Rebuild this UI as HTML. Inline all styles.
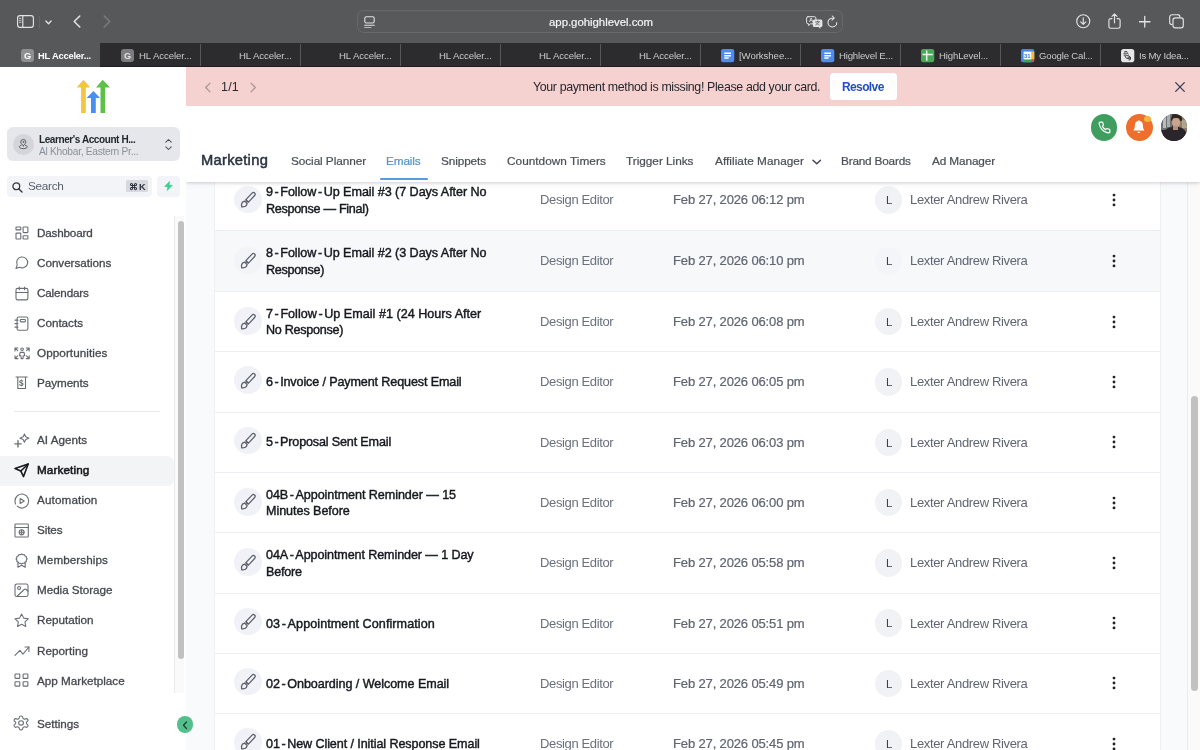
<!DOCTYPE html>
<html lang="en"><head><meta charset="utf-8"><title>Marketing - Emails</title>
<style>
*{box-sizing:border-box;margin:0;padding:0}
html,body{width:1200px;height:750px;overflow:hidden;background:#fff;font-family:"Liberation Sans",sans-serif}
div,span,svg{position:absolute}
.t{white-space:pre;will-change:transform}
svg{overflow:visible}
.s{fill:none;stroke-linecap:round;stroke-linejoin:round}
.n *{vector-effect:non-scaling-stroke}
</style></head><body>
<div id="content" style="left:186px;top:106px;width:1014px;height:644px;background:#f9fafb"></div>
<div id="card" style="left:213.5px;top:106px;width:947px;height:644px;background:#fff;border-left:1px solid #eff1f4;border-right:1px solid #eff1f4"></div>
<div style="left:1187px;top:182px;width:13px;height:568px;background:#fafafa;border-left:1px solid #ececec"></div>
<div style="left:1190.5px;top:396px;width:7px;height:295px;border-radius:4px;background:#c1c1c1"></div>
<div style="left:214.5px;top:230px;width:945.5px;height:1px;background:#eceef1"></div>
<div style="left:234.3px;top:185.65px;width:27.6px;height:27.6px;border-radius:50%;background:#f1f2f7"></div>
<svg style="left:248.3px;top:199.85px" width="1" height="1"><g transform="rotate(43)" class="s" stroke="#5b606a" stroke-width="1.25"><rect x="-1.75" y="-9.6" width="3.5" height="11.2" rx="1.75"/><path d="M-1.7 1.2h3.4M-1.75 3.1L-2.6 5.4Q-2.7 7.2 0 9.3Q2.7 7.2 2.6 5.4L1.75 3.1Z"/></g></svg>
<span class="t" style="left:266.20px;top:186px;font-size:12.6px;line-height:12.6px;letter-spacing:-0.057px;color:#15181e;-webkit-text-stroke:.42px #15181e;">9<span style="position:static;padding:0 1.60px">-</span>Follow<span style="position:static;padding:0 1.60px">-</span>Up Email #3 (7 Days After No</span>
<span class="t" style="left:266.20px;top:203px;font-size:12.6px;line-height:12.6px;letter-spacing:-0.309px;color:#15181e;-webkit-text-stroke:.42px #15181e;">Response — Final)</span>
<span class="t" style="left:540.00px;top:193px;font-size:13px;line-height:13px;letter-spacing:-0.369px;color:#6a707c;">Design Editor</span>
<span class="t" style="left:673.00px;top:193px;font-size:13px;line-height:13px;letter-spacing:-0.140px;color:#5f6571;-webkit-text-stroke:.22px #5f6571;">Feb 27, 2026 06:12 pm</span>
<div style="left:874.5px;top:186.20px;width:27.5px;height:27.5px;border-radius:50%;background:#f0f2f6"></div>
<span class="t" style="left:885.60px;top:195px;font-size:11.5px;line-height:11.5px;color:#3c4149;">L</span>
<span class="t" style="left:909.50px;top:193px;font-size:13px;line-height:13px;letter-spacing:-0.339px;color:#5f6571;">Lexter Andrew Rivera</span>
<svg style="left:1114.25px;top:199.95px" width="1" height="1"><circle cx="0" cy="-4.9" r="1.42" fill="#1f2329"/><circle cx="0" cy="0" r="1.42" fill="#1f2329"/><circle cx="0" cy="4.9" r="1.42" fill="#1f2329"/></svg>
<div style="left:214.5px;top:231px;width:945.5px;height:60px;background:#f7f8fa"></div>
<div style="left:214.5px;top:291px;width:945.5px;height:1px;background:#eceef1"></div>
<div style="left:234.3px;top:246.60px;width:27.6px;height:27.6px;border-radius:50%;background:#f3f4f8"></div>
<svg style="left:248.3px;top:260.80px" width="1" height="1"><g transform="rotate(43)" class="s" stroke="#5b606a" stroke-width="1.25"><rect x="-1.75" y="-9.6" width="3.5" height="11.2" rx="1.75"/><path d="M-1.7 1.2h3.4M-1.75 3.1L-2.6 5.4Q-2.7 7.2 0 9.3Q2.7 7.2 2.6 5.4L1.75 3.1Z"/></g></svg>
<span class="t" style="left:266.20px;top:247px;font-size:12.6px;line-height:12.6px;letter-spacing:-0.057px;color:#15181e;-webkit-text-stroke:.42px #15181e;">8<span style="position:static;padding:0 1.60px">-</span>Follow<span style="position:static;padding:0 1.60px">-</span>Up Email #2 (3 Days After No</span>
<span class="t" style="left:266.20px;top:264px;font-size:12.6px;line-height:12.6px;letter-spacing:-0.317px;color:#15181e;-webkit-text-stroke:.42px #15181e;">Response)</span>
<span class="t" style="left:540.00px;top:254px;font-size:13px;line-height:13px;letter-spacing:-0.369px;color:#6a707c;">Design Editor</span>
<span class="t" style="left:673.00px;top:254px;font-size:13px;line-height:13px;letter-spacing:-0.140px;color:#5f6571;-webkit-text-stroke:.22px #5f6571;">Feb 27, 2026 06:10 pm</span>
<div style="left:874.5px;top:247.15px;width:27.5px;height:27.5px;border-radius:50%;background:#f4f5f8"></div>
<span class="t" style="left:885.60px;top:256px;font-size:11.5px;line-height:11.5px;color:#3c4149;">L</span>
<span class="t" style="left:909.50px;top:254px;font-size:13px;line-height:13px;letter-spacing:-0.339px;color:#5f6571;">Lexter Andrew Rivera</span>
<svg style="left:1114.25px;top:260.90px" width="1" height="1"><circle cx="0" cy="-4.9" r="1.42" fill="#1f2329"/><circle cx="0" cy="0" r="1.42" fill="#1f2329"/><circle cx="0" cy="4.9" r="1.42" fill="#1f2329"/></svg>
<div style="left:214.5px;top:351px;width:945.5px;height:1px;background:#eceef1"></div>
<div style="left:234.3px;top:307.30px;width:27.6px;height:27.6px;border-radius:50%;background:#f1f2f7"></div>
<svg style="left:248.3px;top:321.50px" width="1" height="1"><g transform="rotate(43)" class="s" stroke="#5b606a" stroke-width="1.25"><rect x="-1.75" y="-9.6" width="3.5" height="11.2" rx="1.75"/><path d="M-1.7 1.2h3.4M-1.75 3.1L-2.6 5.4Q-2.7 7.2 0 9.3Q2.7 7.2 2.6 5.4L1.75 3.1Z"/></g></svg>
<span class="t" style="left:266.20px;top:308px;font-size:12.6px;line-height:12.6px;letter-spacing:0.009px;color:#15181e;-webkit-text-stroke:.42px #15181e;">7<span style="position:static;padding:0 1.60px">-</span>Follow<span style="position:static;padding:0 1.60px">-</span>Up Email #1 (24 Hours After</span>
<span class="t" style="left:266.20px;top:324px;font-size:12.6px;line-height:12.6px;letter-spacing:-0.289px;color:#15181e;-webkit-text-stroke:.42px #15181e;">No Response)</span>
<span class="t" style="left:540.00px;top:315px;font-size:13px;line-height:13px;letter-spacing:-0.369px;color:#6a707c;">Design Editor</span>
<span class="t" style="left:673.00px;top:315px;font-size:13px;line-height:13px;letter-spacing:-0.140px;color:#5f6571;-webkit-text-stroke:.22px #5f6571;">Feb 27, 2026 06:08 pm</span>
<div style="left:874.5px;top:307.85px;width:27.5px;height:27.5px;border-radius:50%;background:#f0f2f6"></div>
<span class="t" style="left:885.60px;top:317px;font-size:11.5px;line-height:11.5px;color:#3c4149;">L</span>
<span class="t" style="left:909.50px;top:315px;font-size:13px;line-height:13px;letter-spacing:-0.339px;color:#5f6571;">Lexter Andrew Rivera</span>
<svg style="left:1114.25px;top:321.60px" width="1" height="1"><circle cx="0" cy="-4.9" r="1.42" fill="#1f2329"/><circle cx="0" cy="0" r="1.42" fill="#1f2329"/><circle cx="0" cy="4.9" r="1.42" fill="#1f2329"/></svg>
<div style="left:214.5px;top:412px;width:945.5px;height:1px;background:#eceef1"></div>
<div style="left:234.3px;top:366.30px;width:27.6px;height:27.6px;border-radius:50%;background:#f1f2f7"></div>
<svg style="left:248.3px;top:380.50px" width="1" height="1"><g transform="rotate(43)" class="s" stroke="#5b606a" stroke-width="1.25"><rect x="-1.75" y="-9.6" width="3.5" height="11.2" rx="1.75"/><path d="M-1.7 1.2h3.4M-1.75 3.1L-2.6 5.4Q-2.7 7.2 0 9.3Q2.7 7.2 2.6 5.4L1.75 3.1Z"/></g></svg>
<span class="t" style="left:266.20px;top:376px;font-size:12.6px;line-height:12.6px;letter-spacing:-0.132px;color:#15181e;-webkit-text-stroke:.42px #15181e;">6<span style="position:static;padding:0 1.60px">-</span>Invoice / Payment Request Email</span>
<span class="t" style="left:540.00px;top:375px;font-size:13px;line-height:13px;letter-spacing:-0.369px;color:#6a707c;">Design Editor</span>
<span class="t" style="left:673.00px;top:375px;font-size:13px;line-height:13px;letter-spacing:-0.140px;color:#5f6571;-webkit-text-stroke:.22px #5f6571;">Feb 27, 2026 06:05 pm</span>
<div style="left:874.5px;top:368.15px;width:27.5px;height:27.5px;border-radius:50%;background:#f0f2f6"></div>
<span class="t" style="left:885.60px;top:377px;font-size:11.5px;line-height:11.5px;color:#3c4149;">L</span>
<span class="t" style="left:909.50px;top:375px;font-size:13px;line-height:13px;letter-spacing:-0.339px;color:#5f6571;">Lexter Andrew Rivera</span>
<svg style="left:1114.25px;top:381.90px" width="1" height="1"><circle cx="0" cy="-4.9" r="1.42" fill="#1f2329"/><circle cx="0" cy="0" r="1.42" fill="#1f2329"/><circle cx="0" cy="4.9" r="1.42" fill="#1f2329"/></svg>
<div style="left:214.5px;top:472px;width:945.5px;height:1px;background:#eceef1"></div>
<div style="left:234.3px;top:426.65px;width:27.6px;height:27.6px;border-radius:50%;background:#f1f2f7"></div>
<svg style="left:248.3px;top:440.85px" width="1" height="1"><g transform="rotate(43)" class="s" stroke="#5b606a" stroke-width="1.25"><rect x="-1.75" y="-9.6" width="3.5" height="11.2" rx="1.75"/><path d="M-1.7 1.2h3.4M-1.75 3.1L-2.6 5.4Q-2.7 7.2 0 9.3Q2.7 7.2 2.6 5.4L1.75 3.1Z"/></g></svg>
<span class="t" style="left:266.20px;top:436px;font-size:12.6px;line-height:12.6px;letter-spacing:-0.165px;color:#15181e;-webkit-text-stroke:.42px #15181e;">5<span style="position:static;padding:0 1.60px">-</span>Proposal Sent Email</span>
<span class="t" style="left:540.00px;top:436px;font-size:13px;line-height:13px;letter-spacing:-0.369px;color:#6a707c;">Design Editor</span>
<span class="t" style="left:673.00px;top:436px;font-size:13px;line-height:13px;letter-spacing:-0.140px;color:#5f6571;-webkit-text-stroke:.22px #5f6571;">Feb 27, 2026 06:03 pm</span>
<div style="left:874.5px;top:428.50px;width:27.5px;height:27.5px;border-radius:50%;background:#f0f2f6"></div>
<span class="t" style="left:885.60px;top:438px;font-size:11.5px;line-height:11.5px;color:#3c4149;">L</span>
<span class="t" style="left:909.50px;top:436px;font-size:13px;line-height:13px;letter-spacing:-0.339px;color:#5f6571;">Lexter Andrew Rivera</span>
<svg style="left:1114.25px;top:442.25px" width="1" height="1"><circle cx="0" cy="-4.9" r="1.42" fill="#1f2329"/><circle cx="0" cy="0" r="1.42" fill="#1f2329"/><circle cx="0" cy="4.9" r="1.42" fill="#1f2329"/></svg>
<div style="left:214.5px;top:532px;width:945.5px;height:1px;background:#eceef1"></div>
<div style="left:234.3px;top:488.20px;width:27.6px;height:27.6px;border-radius:50%;background:#f1f2f7"></div>
<svg style="left:248.3px;top:502.40px" width="1" height="1"><g transform="rotate(43)" class="s" stroke="#5b606a" stroke-width="1.25"><rect x="-1.75" y="-9.6" width="3.5" height="11.2" rx="1.75"/><path d="M-1.7 1.2h3.4M-1.75 3.1L-2.6 5.4Q-2.7 7.2 0 9.3Q2.7 7.2 2.6 5.4L1.75 3.1Z"/></g></svg>
<span class="t" style="left:266.20px;top:489px;font-size:12.6px;line-height:12.6px;letter-spacing:-0.075px;color:#15181e;-webkit-text-stroke:.42px #15181e;">04B<span style="position:static;padding:0 1.60px">-</span>Appointment Reminder — 15</span>
<span class="t" style="left:266.20px;top:505px;font-size:12.6px;line-height:12.6px;letter-spacing:-0.065px;color:#15181e;-webkit-text-stroke:.42px #15181e;">Minutes Before</span>
<span class="t" style="left:540.00px;top:496px;font-size:13px;line-height:13px;letter-spacing:-0.369px;color:#6a707c;">Design Editor</span>
<span class="t" style="left:673.00px;top:496px;font-size:13px;line-height:13px;letter-spacing:-0.140px;color:#5f6571;-webkit-text-stroke:.22px #5f6571;">Feb 27, 2026 06:00 pm</span>
<div style="left:874.5px;top:488.75px;width:27.5px;height:27.5px;border-radius:50%;background:#f0f2f6"></div>
<span class="t" style="left:885.60px;top:498px;font-size:11.5px;line-height:11.5px;color:#3c4149;">L</span>
<span class="t" style="left:909.50px;top:496px;font-size:13px;line-height:13px;letter-spacing:-0.339px;color:#5f6571;">Lexter Andrew Rivera</span>
<svg style="left:1114.25px;top:502.50px" width="1" height="1"><circle cx="0" cy="-4.9" r="1.42" fill="#1f2329"/><circle cx="0" cy="0" r="1.42" fill="#1f2329"/><circle cx="0" cy="4.9" r="1.42" fill="#1f2329"/></svg>
<div style="left:214.5px;top:593px;width:945.5px;height:1px;background:#eceef1"></div>
<div style="left:234.3px;top:548.45px;width:27.6px;height:27.6px;border-radius:50%;background:#f1f2f7"></div>
<svg style="left:248.3px;top:562.65px" width="1" height="1"><g transform="rotate(43)" class="s" stroke="#5b606a" stroke-width="1.25"><rect x="-1.75" y="-9.6" width="3.5" height="11.2" rx="1.75"/><path d="M-1.7 1.2h3.4M-1.75 3.1L-2.6 5.4Q-2.7 7.2 0 9.3Q2.7 7.2 2.6 5.4L1.75 3.1Z"/></g></svg>
<span class="t" style="left:266.20px;top:549px;font-size:12.6px;line-height:12.6px;letter-spacing:-0.111px;color:#15181e;-webkit-text-stroke:.42px #15181e;">04A<span style="position:static;padding:0 1.60px">-</span>Appointment Reminder — 1 Day</span>
<span class="t" style="left:266.20px;top:566px;font-size:12.6px;line-height:12.6px;letter-spacing:-0.218px;color:#15181e;-webkit-text-stroke:.42px #15181e;">Before</span>
<span class="t" style="left:540.00px;top:556px;font-size:13px;line-height:13px;letter-spacing:-0.369px;color:#6a707c;">Design Editor</span>
<span class="t" style="left:673.00px;top:556px;font-size:13px;line-height:13px;letter-spacing:-0.140px;color:#5f6571;-webkit-text-stroke:.22px #5f6571;">Feb 27, 2026 05:58 pm</span>
<div style="left:874.5px;top:549.00px;width:27.5px;height:27.5px;border-radius:50%;background:#f0f2f6"></div>
<span class="t" style="left:885.60px;top:558px;font-size:11.5px;line-height:11.5px;color:#3c4149;">L</span>
<span class="t" style="left:909.50px;top:556px;font-size:13px;line-height:13px;letter-spacing:-0.339px;color:#5f6571;">Lexter Andrew Rivera</span>
<svg style="left:1114.25px;top:562.75px" width="1" height="1"><circle cx="0" cy="-4.9" r="1.42" fill="#1f2329"/><circle cx="0" cy="0" r="1.42" fill="#1f2329"/><circle cx="0" cy="4.9" r="1.42" fill="#1f2329"/></svg>
<div style="left:214.5px;top:653px;width:945.5px;height:1px;background:#eceef1"></div>
<div style="left:234.3px;top:607.53px;width:27.6px;height:27.6px;border-radius:50%;background:#f1f2f7"></div>
<svg style="left:248.3px;top:621.73px" width="1" height="1"><g transform="rotate(43)" class="s" stroke="#5b606a" stroke-width="1.25"><rect x="-1.75" y="-9.6" width="3.5" height="11.2" rx="1.75"/><path d="M-1.7 1.2h3.4M-1.75 3.1L-2.6 5.4Q-2.7 7.2 0 9.3Q2.7 7.2 2.6 5.4L1.75 3.1Z"/></g></svg>
<span class="t" style="left:266.20px;top:618px;font-size:12.6px;line-height:12.6px;letter-spacing:0.066px;color:#15181e;-webkit-text-stroke:.42px #15181e;">03<span style="position:static;padding:0 1.60px">-</span>Appointment Confirmation</span>
<span class="t" style="left:540.00px;top:617px;font-size:13px;line-height:13px;letter-spacing:-0.369px;color:#6a707c;">Design Editor</span>
<span class="t" style="left:673.00px;top:617px;font-size:13px;line-height:13px;letter-spacing:-0.140px;color:#5f6571;-webkit-text-stroke:.22px #5f6571;">Feb 27, 2026 05:51 pm</span>
<div style="left:874.5px;top:609.38px;width:27.5px;height:27.5px;border-radius:50%;background:#f0f2f6"></div>
<span class="t" style="left:885.60px;top:618px;font-size:11.5px;line-height:11.5px;color:#3c4149;">L</span>
<span class="t" style="left:909.50px;top:617px;font-size:13px;line-height:13px;letter-spacing:-0.339px;color:#5f6571;">Lexter Andrew Rivera</span>
<svg style="left:1114.25px;top:623.12px" width="1" height="1"><circle cx="0" cy="-4.9" r="1.42" fill="#1f2329"/><circle cx="0" cy="0" r="1.42" fill="#1f2329"/><circle cx="0" cy="4.9" r="1.42" fill="#1f2329"/></svg>
<div style="left:214.5px;top:713px;width:945.5px;height:1px;background:#eceef1"></div>
<div style="left:234.3px;top:667.78px;width:27.6px;height:27.6px;border-radius:50%;background:#f1f2f7"></div>
<svg style="left:248.3px;top:681.98px" width="1" height="1"><g transform="rotate(43)" class="s" stroke="#5b606a" stroke-width="1.25"><rect x="-1.75" y="-9.6" width="3.5" height="11.2" rx="1.75"/><path d="M-1.7 1.2h3.4M-1.75 3.1L-2.6 5.4Q-2.7 7.2 0 9.3Q2.7 7.2 2.6 5.4L1.75 3.1Z"/></g></svg>
<span class="t" style="left:266.20px;top:678px;font-size:12.6px;line-height:12.6px;letter-spacing:-0.066px;color:#15181e;-webkit-text-stroke:.42px #15181e;">02<span style="position:static;padding:0 1.60px">-</span>Onboarding / Welcome Email</span>
<span class="t" style="left:540.00px;top:677px;font-size:13px;line-height:13px;letter-spacing:-0.369px;color:#6a707c;">Design Editor</span>
<span class="t" style="left:673.00px;top:677px;font-size:13px;line-height:13px;letter-spacing:-0.140px;color:#5f6571;-webkit-text-stroke:.22px #5f6571;">Feb 27, 2026 05:49 pm</span>
<div style="left:874.5px;top:669.62px;width:27.5px;height:27.5px;border-radius:50%;background:#f0f2f6"></div>
<span class="t" style="left:885.60px;top:679px;font-size:11.5px;line-height:11.5px;color:#3c4149;">L</span>
<span class="t" style="left:909.50px;top:677px;font-size:13px;line-height:13px;letter-spacing:-0.339px;color:#5f6571;">Lexter Andrew Rivera</span>
<svg style="left:1114.25px;top:683.38px" width="1" height="1"><circle cx="0" cy="-4.9" r="1.42" fill="#1f2329"/><circle cx="0" cy="0" r="1.42" fill="#1f2329"/><circle cx="0" cy="4.9" r="1.42" fill="#1f2329"/></svg>
<div style="left:214.5px;top:774px;width:945.5px;height:1px;background:#eceef1"></div>
<div style="left:234.3px;top:728.15px;width:27.6px;height:27.6px;border-radius:50%;background:#f1f2f7"></div>
<svg style="left:248.3px;top:742.35px" width="1" height="1"><g transform="rotate(43)" class="s" stroke="#5b606a" stroke-width="1.25"><rect x="-1.75" y="-9.6" width="3.5" height="11.2" rx="1.75"/><path d="M-1.7 1.2h3.4M-1.75 3.1L-2.6 5.4Q-2.7 7.2 0 9.3Q2.7 7.2 2.6 5.4L1.75 3.1Z"/></g></svg>
<span class="t" style="left:266.20px;top:738px;font-size:12.6px;line-height:12.6px;letter-spacing:-0.094px;color:#15181e;-webkit-text-stroke:.42px #15181e;">01<span style="position:static;padding:0 1.60px">-</span>New Client / Initial Response Email</span>
<span class="t" style="left:540.00px;top:737px;font-size:13px;line-height:13px;letter-spacing:-0.369px;color:#6a707c;">Design Editor</span>
<span class="t" style="left:673.00px;top:737px;font-size:13px;line-height:13px;letter-spacing:-0.140px;color:#5f6571;-webkit-text-stroke:.22px #5f6571;">Feb 27, 2026 05:45 pm</span>
<div style="left:874.5px;top:730.00px;width:27.5px;height:27.5px;border-radius:50%;background:#f0f2f6"></div>
<span class="t" style="left:885.60px;top:739px;font-size:11.5px;line-height:11.5px;color:#3c4149;">L</span>
<span class="t" style="left:909.50px;top:737px;font-size:13px;line-height:13px;letter-spacing:-0.339px;color:#5f6571;">Lexter Andrew Rivera</span>
<svg style="left:1114.25px;top:743.75px" width="1" height="1"><circle cx="0" cy="-4.9" r="1.42" fill="#1f2329"/><circle cx="0" cy="0" r="1.42" fill="#1f2329"/><circle cx="0" cy="4.9" r="1.42" fill="#1f2329"/></svg>
<div id="head" style="left:186px;top:106px;width:1014px;height:75.8px;background:#fff;box-shadow:0 1px 3px rgba(20,30,50,.16),0 2px 5px rgba(20,30,50,.06)"></div>
<span class="t" style="left:200.60px;top:153px;font-size:14.7px;line-height:14.7px;letter-spacing:0.289px;color:#2b3342;-webkit-text-stroke:.5px #2b3342;">Marketing</span>
<span class="t" style="left:291.00px;top:156px;font-size:11.8px;line-height:11.8px;letter-spacing:-0.077px;color:#4a4f58;-webkit-text-stroke:.22px #4a4f58;">Social Planner</span>
<span class="t" style="left:386.00px;top:156px;font-size:11.8px;line-height:11.8px;letter-spacing:-0.134px;color:#5294d6;-webkit-text-stroke:.22px #5294d6;">Emails</span>
<span class="t" style="left:441.40px;top:156px;font-size:11.8px;line-height:11.8px;letter-spacing:-0.115px;color:#4a4f58;-webkit-text-stroke:.22px #4a4f58;">Snippets</span>
<span class="t" style="left:506.80px;top:156px;font-size:11.8px;line-height:11.8px;letter-spacing:0.028px;color:#4a4f58;-webkit-text-stroke:.22px #4a4f58;">Countdown Timers</span>
<span class="t" style="left:626.30px;top:156px;font-size:11.8px;line-height:11.8px;letter-spacing:-0.019px;color:#4a4f58;-webkit-text-stroke:.22px #4a4f58;">Trigger Links</span>
<span class="t" style="left:714.50px;top:156px;font-size:11.8px;line-height:11.8px;letter-spacing:0.035px;color:#4a4f58;-webkit-text-stroke:.22px #4a4f58;">Affiliate Manager</span>
<span class="t" style="left:840.80px;top:156px;font-size:11.8px;line-height:11.8px;letter-spacing:-0.203px;color:#4a4f58;-webkit-text-stroke:.22px #4a4f58;">Brand Boards</span>
<span class="t" style="left:931.50px;top:156px;font-size:11.8px;line-height:11.8px;letter-spacing:-0.128px;color:#4a4f58;-webkit-text-stroke:.22px #4a4f58;">Ad Manager</span>
<div style="left:379.7px;top:177.6px;width:48px;height:2.2px;background:#5a9bd8;border-radius:1px"></div>
<svg style="left:811.5px;top:157.5px" width="9.5" height="8" viewBox="0 0 9.5 8"><path class="s" d="M1 2.2l3.75 3.6 3.75-3.6" stroke="#3c4250" stroke-width="1.4"/></svg>
<div style="left:1090.7px;top:114px;width:26.8px;height:26.8px;border-radius:50%;background:#3f9e5f"></div>
<svg style="left:1097.6px;top:120.8px" width="13" height="13" viewBox="0 0 24 24"><path class="s" stroke="#fff" stroke-width="2.2" d="M22 16.92v3a2 2 0 0 1-2.18 2 19.79 19.79 0 0 1-8.63-3.07 19.5 19.5 0 0 1-6-6 19.79 19.79 0 0 1-3.07-8.67A2 2 0 0 1 4.11 2h3a2 2 0 0 1 2 1.72 12.84 12.84 0 0 0 .7 2.81 2 2 0 0 1-.45 2.11L8.09 9.91a16 16 0 0 0 6 6l1.27-1.27a2 2 0 0 1 2.11-.45 12.84 12.84 0 0 0 2.81.7A2 2 0 0 1 22 16.92z"/></svg>
<div style="left:1126px;top:114px;width:26.8px;height:26.8px;border-radius:50%;background:#ee6f2d"></div>
<svg style="left:1131.400px;top:119.300px" width="15.800" height="15.800" viewBox="0 0 24 24"><path fill="#fff" d="M6 9a6 6 0 0 1 12 0c0 6 2.6 8 2.6 8.600H3.4C3.4 17 6 15 6 9z"/><path fill="#fff" d="M9.8 19.2h4.400a2.2 2.2 0 0 1-4.400 0z"/><circle cx="12" cy="3.300" r="1.4" fill="#fff"/></svg>
<div style="left:1144.2px;top:115.6px;width:6.8px;height:6.8px;border-radius:50%;background:#f3b53f"></div>
<div style="left:1160.8px;top:114px;width:26.6px;height:26.7px;border-radius:50%;overflow:hidden;background:#2b2728"><div style="left:-2px;top:-2px;width:31px;height:31px;filter:blur(.7px)"><div style="left:2px;top:2px;width:11px;height:16px;background:#6f7373"></div><div style="left:4.500px;top:2px;width:2.500px;height:14px;background:#b9bcbc"></div><div style="left:8.500px;top:2px;width:2.500px;height:13px;background:#a9adad"></div><div style="left:20px;top:3px;width:11px;height:17px;background:#8e8069"></div><div style="left:23px;top:8px;width:5px;height:8px;background:#b0a48c"></div><div style="left:4px;top:15px;width:24px;height:16px;border-radius:9px 9px 0 0;background:#29252a"></div><div style="left:12px;top:2px;width:11.500px;height:7px;border-radius:5px 5px 1px 1px;background:#2f2520"></div><div style="left:13px;top:6px;width:8px;height:9.500px;border-radius:40% 40% 50% 50%;background:#c9a58d"></div><div style="left:14.500px;top:14px;width:5px;height:4px;background:#b58f79"></div></div></div>
<div id="banner" style="left:186px;top:66.7px;width:1014px;height:39.5px;background:#f5d2cf"></div>
<svg style="left:203.5px;top:81.5px" width="8" height="11" viewBox="0 0 8 11"><path class="s" d="M6 1.2L1.700 5.500 6 9.800" stroke="#9f9093" stroke-width="1.1"/></svg>
<svg style="left:248.5px;top:81.5px" width="8" height="11" viewBox="0 0 8 11"><path class="s" d="M2 1.200L6.300 5.500 2 9.800" stroke="#9f9093" stroke-width="1.1"/></svg>
<span class="t" style="left:221.30px;top:81px;font-size:12.5px;line-height:12.5px;letter-spacing:0.203px;color:#2a2a30;">1/1</span>
<span class="t" style="left:532.50px;top:81px;font-size:12.4px;line-height:12.4px;letter-spacing:-0.357px;color:#252830;">Your payment method is missing! Please add your card.</span>
<div style="left:830px;top:73.3px;width:66.6px;height:26.3px;border-radius:3.5px;background:#fff"></div>
<span class="t" style="left:842.30px;top:81px;font-size:12px;line-height:12px;font-weight:700;letter-spacing:-0.619px;color:#1f4fc0;">Resolve</span>
<svg style="left:1175px;top:81.6px" width="10" height="10" viewBox="0 0 10 10"><path class="s" d="M.7.700l8.600 8.600M9.300.700L.7 9.300" stroke="#2c3354" stroke-width="1.2"/></svg>
<div id="side" style="left:0;top:66.7px;width:186.3px;height:684px;background:#fff"></div>
<svg style="left:0;top:0" width="1" height="1"><path fill="#f2c63e" d="M83.500 79.800L90.300 87.600H85.800V113H81.100V87.600H76.600z"/><path fill="#4a8ff0" d="M93.400 90.900L100.100 97.900H95.800V113H91V97.900H86.600z"/><path fill="#5cc246" d="M102.700 79.800L110 87.600H105.100V113H100.500V87.600H96z"/></svg>
<div style="left:7px;top:126.7px;width:173px;height:34.2px;border-radius:6px;background:#e5e7eb"></div>
<div style="left:13px;top:133.6px;width:21px;height:21px;border-radius:50%;background:#d3d5da"></div>
<svg style="left:17.900px;top:138.900px" width="10.600" height="10.600" viewBox="0 0 24 24"><g class="s" stroke="#4e535b" stroke-width="2.100"><path d="M12 15.200c-3.700-3.500-5.700-5.700-5.700-8.400a5.700 5.700 0 0 1 11.400 0c0 2.700-2 4.900-5.700 8.400z"/><circle cx="12" cy="6.800" r=".9"/><path d="M7.400 14.200C4.600 14.900 3 16.200 3 17.700c0 2.400 4 4.100 9 4.100s9-1.700 9-4.100c0-1.500-1.600-2.800-4.400-3.500"/></g></svg>
<span class="t" style="left:38.70px;top:135px;font-size:10px;line-height:10px;font-weight:700;letter-spacing:-0.413px;color:#23272f;">Learner's Account H...</span>
<span class="t" style="left:38.70px;top:147px;font-size:10.2px;line-height:10.2px;letter-spacing:-0.275px;color:#8b9098;">Al Khobar, Eastern Pr...</span>
<svg style="left:164.5px;top:137.5px" width="7" height="13" viewBox="0 0 7 13"><path class="s" d="M.8 4.200L3.500 1.500 6.200 4.200M.8 8.800L3.500 11.500 6.200 8.800" stroke="#4a4f57" stroke-width="1.05"/></svg>
<div style="left:7px;top:175.8px;width:144.7px;height:21px;border-radius:4px;background:#f2f4f7"></div>
<svg style="left:12px;top:181.5px" width="11" height="11" viewBox="0 0 11 11"><circle class="s" cx="4.300" cy="4.300" r="3.400" stroke="#33373e" stroke-width="1.3"/><path class="s" d="M6.900 6.900L10 10" stroke="#33373e" stroke-width="1.4"/></svg>
<span class="t" style="left:27.50px;top:181px;font-size:11.8px;line-height:11.8px;letter-spacing:-0.315px;color:#5c6169;">Search</span>
<div style="left:126.200px;top:180px;width:21.600px;height:12.400px;border-radius:1.500px;background:#d6d9dd"></div>
<span class="t" style="left:129.30px;top:183px;font-size:8.6px;line-height:8.6px;font-weight:700;letter-spacing:-0.700px;color:#2f333a;font-family:"DejaVu Sans",sans-serif;">⌘</span>
<span class="t" style="left:138.60px;top:183px;font-size:9.2px;line-height:9.2px;font-weight:700;letter-spacing:-0.241px;color:#2f333a;">K</span>
<div style="left:157px;top:175.8px;width:23px;height:21px;border-radius:4px;background:#f2f4f7"></div>
<svg style="left:164px;top:180.900px" width="9" height="9.800" viewBox="0 0 9 10"><path fill="#3fcf8e" stroke="#3fcf8e" stroke-width=".8" stroke-linejoin="round" d="M5.600.400L.7 5.600h3.200L3.200 9.600 8.300 4.400H5z"/></svg>
<div style="left:0;top:456px;width:174px;height:29.5px;border-radius:0 7px 7px 0;background:#f3f4f6"></div>
<div style="left:13.5px;top:411px;width:146.5px;height:1px;background:#e7e9ec"></div>
<span class="t" style="left:37.00px;top:227px;font-size:11.7px;line-height:11.7px;letter-spacing:-0.188px;color:#44484f;-webkit-text-stroke:.3px #44484f;">Dashboard</span>
<svg style="left:15.55px;top:227.05px" width="11.90" height="12.00" viewBox="0 0 11.9 12" preserveAspectRatio="none"><g class="s n" stroke="#6a6e76" stroke-width="1.1"><rect x="0" y="0" width="4.8" height="2.9" rx=".5"/><rect x="0" y="6.1" width="4.8" height="5.9" rx=".5"/><rect x="7.1" y="0" width="4.8" height="5.6" rx=".5"/><rect x="7.1" y="8.8" width="4.8" height="3.2" rx=".5"/></g></svg>
<span class="t" style="left:37.00px;top:257px;font-size:11.7px;line-height:11.7px;letter-spacing:-0.032px;color:#44484f;-webkit-text-stroke:.3px #44484f;">Conversations</span>
<svg style="left:15.75px;top:257.35px" width="11.70" height="11.50" viewBox="2 3 19 19" preserveAspectRatio="none"><g class="s n" stroke="#6a6e76" stroke-width="1.1"><path d="M7.9 20A9 9 0 1 0 4 16.1L2 22z"/></g></svg>
<span class="t" style="left:37.00px;top:287px;font-size:11.7px;line-height:11.7px;letter-spacing:-0.176px;color:#44484f;-webkit-text-stroke:.3px #44484f;">Calendars</span>
<svg style="left:15.55px;top:286.85px" width="11.90" height="12.90" viewBox="3 2.5 18 19.0" preserveAspectRatio="none"><g class="s n" stroke="#6a6e76" stroke-width="1.1"><rect x="3" y="4.5" width="18" height="17" rx="2.4"/><path d="M16 2.5v4M8 2.500v4M3 10.500h18"/></g></svg>
<span class="t" style="left:37.00px;top:317px;font-size:11.7px;line-height:11.7px;letter-spacing:-0.016px;color:#44484f;-webkit-text-stroke:.3px #44484f;">Contacts</span>
<svg style="left:14.55px;top:316.55px" width="12.90" height="13.30" viewBox="2 2.5 18.5 19.0" preserveAspectRatio="none"><g class="s n" stroke="#6a6e76" stroke-width="1.1"><rect x="5" y="2.500" width="15.500" height="19" rx="2.300"/><path d="M2 7h4.200M2 12h4.200M2 17h4.200"/><rect x="9.500" y="6" width="7.500" height="3.400" rx="1.2"/></g></svg>
<span class="t" style="left:37.00px;top:347px;font-size:11.7px;line-height:11.7px;letter-spacing:0.076px;color:#44484f;-webkit-text-stroke:.3px #44484f;">Opportunities</span>
<svg style="left:14.55px;top:347.55px" width="14.20" height="10.60" viewBox="2 2 20 20" preserveAspectRatio="none"><g class="s n" stroke="#6a6e76" stroke-width="1.1"><ellipse cx="12" cy="4.300" rx="1.800" ry="2.400"/><path d="M9.300 10.200h5.400l1 6.300h-2l-.5 5.500h-2.400l-.5-5.500h-2z"/><path d="M2 7.500V2h4.200M2 2l3.800 5M22 7.500V2h-4.200M22 2l-3.800 5M2 16.500V22h4.200M2 22l3.800-5M22 16.500V22h-4.200M22 22l-3.800-5"/></g></svg>
<span class="t" style="left:37.00px;top:377px;font-size:11.7px;line-height:11.7px;letter-spacing:-0.059px;color:#44484f;-webkit-text-stroke:.3px #44484f;">Payments</span>
<span class="t" style="left:19.25px;top:380px;font-size:8.2px;line-height:8.2px;font-weight:700;color:#666a72;">$</span>
<svg style="left:15.85px;top:377.25px" width="11.30" height="11.50" viewBox="0 0 20 20" preserveAspectRatio="none"><g class="s n" stroke="#6a6e76" stroke-width="1.1"><path d="M0 0h20M3.200 0v20h13.600V0"/></g></svg>
<span class="t" style="left:37.00px;top:434px;font-size:11.7px;line-height:11.7px;letter-spacing:-0.003px;color:#44484f;-webkit-text-stroke:.3px #44484f;">AI Agents</span>
<svg style="left:14.15px;top:433.85px" width="14.90" height="13.00" viewBox="0 0 16 14.1" preserveAspectRatio="none"><g class="s n" stroke="#6a6e76" stroke-width="1.1"><path d="M11.200 0l1.400 3.100 3.400 1.400-3.400 1.400-1.400 3.100-1.400-3.100-3.400-1.400 3.400-1.400z"/><path d="M4.300 7.300v6.800M.9 10.700h6.800" stroke-width="1.350"/></g></svg>
<span class="t" style="left:37.00px;top:464px;font-size:11.7px;line-height:11.7px;letter-spacing:0.130px;color:#16181d;-webkit-text-stroke:.55px #16181d;">Marketing</span>
<svg style="left:15.00px;top:464.30px" width="13.20" height="12.60" viewBox="2.5 2.5 19.0 19.0" preserveAspectRatio="none"><g class="s n" stroke="#17191e" stroke-width="1.6"><path d="M21.500 2.500L14.800 21.500l-3.900-8.400L2.500 9.200z"/><path d="M21.500 2.500L10.900 13.100"/></g></svg>
<span class="t" style="left:37.00px;top:494px;font-size:11.7px;line-height:11.7px;letter-spacing:0.138px;color:#44484f;-webkit-text-stroke:.3px #44484f;">Automation</span>
<svg style="left:14.55px;top:493.55px" width="13.70" height="14.10" viewBox="2 2 20 20" preserveAspectRatio="none"><g class="s n" stroke="#6a6e76" stroke-width="1.1"><path d="M5.200 19.300A10 10 0 1 0 2 12c0 1.500.3 2.900.9 4.200"/><path d="M9.500 8.500l6 3.500-6 3.500z"/></g></svg>
<span class="t" style="left:37.00px;top:524px;font-size:11.7px;line-height:11.7px;letter-spacing:-0.097px;color:#44484f;-webkit-text-stroke:.3px #44484f;">Sites</span>
<svg style="left:14.95px;top:524.25px" width="13.30" height="13.00" viewBox="2.5 3 19.0 18" preserveAspectRatio="none"><g class="s n" stroke="#6a6e76" stroke-width="1.1"><rect x="2.500" y="3" width="19" height="18" rx="1"/><path d="M2.500 7.800h19"/><circle cx="12" cy="14.400" r="3.500"/><path d="M8.500 14.400h7M12 10.900v7"/></g></svg>
<span class="t" style="left:37.00px;top:554px;font-size:11.7px;line-height:11.7px;letter-spacing:0.077px;color:#44484f;-webkit-text-stroke:.3px #44484f;">Memberships</span>
<svg style="left:16.25px;top:553.55px" width="11.20" height="13.30" viewBox="2 1 20 22" preserveAspectRatio="none"><g class="s n" stroke="#6a6e76" stroke-width="1.1"><path d="M12 1l2.300 1.500 2.700-.2 1.200 2.500 2.400 1.200-.3 2.700L22 11l-1.700 2.300.3 2.700-2.400 1.200L17 19.700l-2.700-.2L12 21l-2.300-1.500-2.700.2-1.200-2.500-2.400-1.200.3-2.700L2 11l1.700-2.300-.3-2.700 2.400-1.200L7 2.300l2.700.2z" transform="translate(0 .2) scale(1 .82)"/><path d="M5.500 15.500V23l6.500-3.300 6.500 3.300v-7.500"/></g></svg>
<span class="t" style="left:37.00px;top:584px;font-size:11.7px;line-height:11.7px;letter-spacing:-0.040px;color:#44484f;-webkit-text-stroke:.3px #44484f;">Media Storage</span>
<svg style="left:15.25px;top:583.95px" width="13.00" height="12.50" viewBox="2.8 2.8 18.4 18.4" preserveAspectRatio="none"><g class="s n" stroke="#6a6e76" stroke-width="1.1"><rect x="2.800" y="2.800" width="18.400" height="18.400" rx="2.600"/><circle cx="8.600" cy="8.600" r="2.100"/><path d="M21.200 13.500l-2.600-2.600a2 2 0 0 0-2.800 0L5.500 21.200"/></g></svg>
<span class="t" style="left:37.00px;top:614px;font-size:11.7px;line-height:11.7px;letter-spacing:-0.005px;color:#44484f;-webkit-text-stroke:.3px #44484f;">Reputation</span>
<svg style="left:14.95px;top:614.35px" width="13.30" height="12.50" viewBox="2.3 2.3 19.4 18.5" preserveAspectRatio="none"><g class="s n" stroke="#6a6e76" stroke-width="1.1"><path d="M12 2.300l3 6.100 6.700 1-4.850 4.700 1.150 6.700L12 17.600l-6 3.200 1.150-6.700L2.300 9.400l6.700-1z"/></g></svg>
<span class="t" style="left:37.00px;top:645px;font-size:11.7px;line-height:11.7px;letter-spacing:0.035px;color:#44484f;-webkit-text-stroke:.3px #44484f;">Reporting</span>
<svg style="left:14.55px;top:646.55px" width="13.90" height="8.30" viewBox="2 6.5 20 10.0" preserveAspectRatio="none"><g class="s n" stroke="#6a6e76" stroke-width="1.1"><path d="M22 6.500l-8.500 8.500-4.500-4.500L2 16.500"/><path d="M16.500 6.500H22v5.500"/></g></svg>
<span class="t" style="left:37.00px;top:675px;font-size:11.7px;line-height:11.7px;letter-spacing:-0.000px;color:#44484f;-webkit-text-stroke:.3px #44484f;">App Marketplace</span>
<svg style="left:15.15px;top:674.35px" width="12.90" height="12.10" viewBox="0 0 14 13.2" preserveAspectRatio="none"><g class="s n" stroke="#6a6e76" stroke-width="1.1"><rect x="0" y="0" width="5.200" height="4.800" rx=".7"/><rect x="8.800" y="0" width="5.200" height="4.800" rx=".7"/><rect x="8.800" y="8.400" width="5.200" height="4.800" rx=".7"/><rect x="0" y="8.400" width="5.200" height="4.800" rx=".7"/></g></svg>
<span class="t" style="left:37.00px;top:718px;font-size:11.7px;line-height:11.7px;letter-spacing:-0.029px;color:#44484f;-webkit-text-stroke:.3px #44484f;">Settings</span>
<svg style="left:14.35px;top:716.35px" width="14.10" height="13.90" viewBox="2.9 2 18.200000000000003 20" preserveAspectRatio="none"><g class="s n" stroke="#6a6e76" stroke-width="1.1"><path d="M12.22 2h-.44a2 2 0 0 0-2 2v.18a2 2 0 0 1-1 1.73l-.43.25a2 2 0 0 1-2 0l-.15-.08a2 2 0 0 0-2.73.73l-.22.38a2 2 0 0 0 .73 2.73l.15.1a2 2 0 0 1 1 1.72v.51a2 2 0 0 1-1 1.74l-.15.09a2 2 0 0 0-.73 2.73l.22.38a2 2 0 0 0 2.73.73l.15-.08a2 2 0 0 1 2 0l.43.25a2 2 0 0 1 1 1.73V20a2 2 0 0 0 2 2h.44a2 2 0 0 0 2-2v-.18a2 2 0 0 1 1-1.73l.43-.25a2 2 0 0 1 2 0l.15.08a2 2 0 0 0 2.73-.73l.22-.39a2 2 0 0 0-.73-2.73l-.15-.08a2 2 0 0 1-1-1.74v-.5a2 2 0 0 1 1-1.74l.15-.09a2 2 0 0 0 .73-2.73l-.22-.38a2 2 0 0 0-2.73-.73l-.15.08a2 2 0 0 1-2 0l-.43-.25a2 2 0 0 1-1-1.73V4a2 2 0 0 0-2-2z"/><circle cx="12" cy="12" r="3.100"/></g></svg>
<div style="left:174.3px;top:216px;width:10px;height:476.500px;background:#fafafa;border-left:1px solid #ebebeb"></div>
<div style="left:177.6px;top:220.8px;width:6.2px;height:438.500px;border-radius:3.1px;background:#c1c1c1"></div>
<div style="left:176.7px;top:716.3px;width:16.7px;height:16.7px;border-radius:50%;background:#52bf8c"></div>
<svg style="left:181.5px;top:720.5px" width="6" height="8.500" viewBox="0 0 6 8.500"><path class="s" d="M4.500 1L1.500 4.250 4.500 7.500" stroke="#1f3b2e" stroke-width="1.2"/></svg>
<div id="chrome" style="left:0;top:0;width:1200px;height:43.200px;background:#57585a"></div>
<div id="tabs" style="left:0;top:43px;width:1200px;height:23.700px;background:#2c2c2e;border-bottom:.7px solid #1d1d1f"></div>
<div style="left:0;top:43px;width:100.300px;height:23.700px;background:#57585a"></div>
<div style="left:199.9px;top:43.800px;width:1px;height:22.500px;background:#58585a"></div>
<div style="left:299.9px;top:43.800px;width:1px;height:22.500px;background:#58585a"></div>
<div style="left:399.9px;top:43.800px;width:1px;height:22.500px;background:#58585a"></div>
<div style="left:499.9px;top:43.800px;width:1px;height:22.500px;background:#58585a"></div>
<div style="left:599.9px;top:43.800px;width:1px;height:22.500px;background:#58585a"></div>
<div style="left:699.9px;top:43.800px;width:1px;height:22.500px;background:#58585a"></div>
<div style="left:799.9px;top:43.800px;width:1px;height:22.500px;background:#58585a"></div>
<div style="left:899.9px;top:43.800px;width:1px;height:22.500px;background:#58585a"></div>
<div style="left:999.9px;top:43.800px;width:1px;height:22.500px;background:#58585a"></div>
<div style="left:1099.9px;top:43.800px;width:1px;height:22.500px;background:#58585a"></div>
<svg style="left:17.400px;top:14.800px" width="17" height="13" viewBox="0 0 17 13"><g class="s" stroke="#e4e4e6" stroke-width="1.150"><rect x=".6" y=".6" width="15.800" height="11.800" rx="2.400"/><path d="M5.800.600v11.800"/><path d="M2.400 3.300h1.600M2.400 5.300h1.600M2.400 7.300h1.600" stroke-width=".8"/></g></svg>
<div style="left:39.200px;top:15.500px;width:1px;height:12px;background:#646567"></div>
<svg style="left:45px;top:19.500px" width="7" height="5" viewBox="0 0 7 5"><path class="s" stroke="#e4e4e6" stroke-width="1.300" d="M.9 1l2.600 2.700L6.100 1"/></svg>
<svg style="left:72.500px;top:14.800px" width="8" height="13" viewBox="0 0 8 13"><path class="s" stroke="#e4e4e6" stroke-width="1.500" d="M6.800 1L1.200 6.500 6.800 12"/></svg>
<svg style="left:102.500px;top:14.800px" width="8" height="13" viewBox="0 0 8 13"><path class="s" stroke="#7c7d7f" stroke-width="1.500" d="M1.200 1l5.600 5.500L1.200 12"/></svg>
<div style="left:357.300px;top:10px;width:485.500px;height:23.400px;border-radius:6.500px;background:#58595b;border:1px solid #68696b"></div>
<svg style="left:363.600px;top:15.600px" width="11" height="13" viewBox="0 0 11 13"><g class="s" stroke="#e4e4e6" stroke-width="1.100"><rect x=".8" y=".7" width="9.400" height="6.300" rx="1.600"/><path d="M.7 9.300h9.600" /><path d="M.7 11.500h6.200" stroke="#b9b9bb"/></g></svg>
<span class="t" style="left:548.70px;top:17px;font-size:11.4px;line-height:11.4px;letter-spacing:-0.021px;color:#f5f5f6;-webkit-text-stroke:.2px #f5f5f6;">app.gohighlevel.com</span>
<svg style="left:805.900px;top:15.600px" width="17" height="13" viewBox="0 0 17 13"><path class="s" stroke="#e4e4e6" stroke-width="1" d="M2 .700h6.500a1.400 1.400 0 0 1 1.400 1.400v4.300a1.400 1.400 0 0 1-1.400 1.400H4.500L2.600 9.500V7.800H2A1.400 1.400 0 0 1 .6 6.400V2.100A1.400 1.400 0 0 1 2 .7z"/><path fill="#e4e4e6" d="M8.300 3.600h6.600a1.500 1.500 0 0 1 1.500 1.500v4.400a1.500 1.500 0 0 1-1.500 1.500h-.5v1.800l-2-1.800H8.300a1.500 1.500 0 0 1-1.500-1.500V5.100a1.500 1.500 0 0 1 1.500-1.500z"/><path d="M9.500 5.800h4.200M11.600 5v.8M13 5.800c-.4 1.600-1.700 2.700-3.300 3.200M10.300 6.700c.5 1.100 1.600 1.900 2.900 2.300" class="s" stroke="#57585a" stroke-width=".7"/></svg>
<span class="t" style="left:809.20px;top:18px;font-size:5.8px;line-height:5.8px;font-weight:700;color:#e4e4e6;">A</span>
<svg style="left:827px;top:15.300px" width="11" height="13" viewBox="0 0 11 13"><path class="s" stroke="#e4e4e6" stroke-width="1.100" d="M9.800 7.600A4.400 4.400 0 1 1 5.400 3.200h1.400"/><path class="s" stroke="#e4e4e6" stroke-width="1.100" d="M5.300 1l1.900 2.200-2.200 1.900"/></svg>
<svg style="left:1076px;top:14px" width="14.500" height="14.500" viewBox="0 0 14.500 14.500"><g class="s" stroke="#e4e4e6" stroke-width="1.150"><circle cx="7.250" cy="7.250" r="6.500"/><path d="M7.250 3.800v6.500M4.700 7.900l2.550 2.500 2.550-2.500"/></g></svg>
<svg style="left:1107.800px;top:12.800px" width="13" height="16" viewBox="0 0 13 16"><g class="s" stroke="#e4e4e6" stroke-width="1.150"><path d="M4 5.600H2.600A1.700 1.700 0 0 0 .9 7.300v6.200a1.700 1.700 0 0 0 1.700 1.700h7.800a1.700 1.700 0 0 0 1.700-1.700V7.300a1.700 1.700 0 0 0-1.700-1.700H9"/><path d="M6.500 9.800V1M4 3.300L6.500.9 9 3.300"/></g></svg>
<svg style="left:1139px;top:15.500px" width="11.500" height="11.500" viewBox="0 0 11.500 11.500"><path class="s" stroke="#e4e4e6" stroke-width="1.300" d="M5.750.500v10.500M.5 5.750h10.500"/></svg>
<svg style="left:1169px;top:14px" width="15" height="14.500" viewBox="0 0 15 14.500"><g class="s" stroke="#e4e4e6" stroke-width="1.150"><rect x="4" y="3.900" width="10.300" height="10" rx="2.300"/><path d="M2.900 10.600A2.300 2.300 0 0 1 .7 8.300V3A2.300 2.300 0 0 1 3 .7h5.600a2.300 2.300 0 0 1 2.300 2.200"/></g></svg>
<span class="t" style="left:38.00px;top:52px;font-size:9.3px;line-height:9.3px;font-weight:700;letter-spacing:-0.177px;color:#ffffff;transform:scaleY(1.03);transform-origin:0 85%;">HL Acceler...</span>
<div style="left:20.5px;top:48.7px;width:13.200px;height:13.200px;border-radius:3px;background:#8e8f92"></div>
<span class="t" style="left:23.80px;top:52px;font-size:9.2px;line-height:9.2px;font-weight:700;color:#ffffff;">G</span>
<span class="t" style="left:138.50px;top:51px;font-size:9.6px;line-height:9.6px;letter-spacing:-0.055px;color:#cbcbcd;transform:scaleY(1.03);transform-origin:0 85%;">HL Acceler...</span>
<div style="left:120.5px;top:48.7px;width:13.200px;height:13.200px;border-radius:3px;background:#7b7c7f"></div>
<span class="t" style="left:123.80px;top:52px;font-size:9.2px;line-height:9.2px;font-weight:700;color:#e2e2e4;">G</span>
<span class="t" style="left:238.50px;top:51px;font-size:9.6px;line-height:9.6px;letter-spacing:-0.055px;color:#cbcbcd;transform:scaleY(1.03);transform-origin:0 85%;">HL Acceler...</span>
<span class="t" style="left:338.50px;top:51px;font-size:9.6px;line-height:9.6px;letter-spacing:-0.055px;color:#cbcbcd;transform:scaleY(1.03);transform-origin:0 85%;">HL Acceler...</span>
<span class="t" style="left:438.50px;top:51px;font-size:9.6px;line-height:9.6px;letter-spacing:-0.055px;color:#cbcbcd;transform:scaleY(1.03);transform-origin:0 85%;">HL Acceler...</span>
<span class="t" style="left:538.50px;top:51px;font-size:9.6px;line-height:9.6px;letter-spacing:-0.055px;color:#cbcbcd;transform:scaleY(1.03);transform-origin:0 85%;">HL Acceler...</span>
<span class="t" style="left:638.50px;top:51px;font-size:9.6px;line-height:9.6px;letter-spacing:-0.055px;color:#cbcbcd;transform:scaleY(1.03);transform-origin:0 85%;">HL Acceler...</span>
<span class="t" style="left:738.50px;top:51px;font-size:9.6px;line-height:9.6px;letter-spacing:-0.057px;color:#cbcbcd;transform:scaleY(1.03);transform-origin:0 85%;">[Workshee...</span>
<svg style="left:720.5px;top:48.7px" width="13.300" height="13.300" viewBox="0 0 13.300 13.300"><rect width="13.300" height="13.300" rx="2.500" fill="#4c8cf5"/><path d="M3.300 4.300h6.700M3.300 6.650h6.700M3.300 9h4.400" stroke="#fff" stroke-width="1.500"/></svg>
<span class="t" style="left:838.50px;top:51px;font-size:9.6px;line-height:9.6px;letter-spacing:-0.181px;color:#cbcbcd;transform:scaleY(1.03);transform-origin:0 85%;">Highlevel E...</span>
<svg style="left:820.5px;top:48.7px" width="13.300" height="13.300" viewBox="0 0 13.300 13.300"><rect width="13.300" height="13.300" rx="2.500" fill="#4c8cf5"/><path d="M3.300 4.300h6.700M3.300 6.650h6.700M3.300 9h4.400" stroke="#fff" stroke-width="1.500"/></svg>
<span class="t" style="left:938.50px;top:51px;font-size:9.6px;line-height:9.6px;letter-spacing:-0.139px;color:#cbcbcd;transform:scaleY(1.03);transform-origin:0 85%;">HighLevel...</span>
<svg style="left:920.5px;top:48.7px" width="13.300" height="13.300" viewBox="0 0 13.300 13.300"><rect width="13.300" height="13.300" rx="2.500" fill="#4aa85a"/><path d="M5.700 1.500v10.300M1.500 5.400h10.300" stroke="#eaf6ec" stroke-width="1.500"/></svg>
<span class="t" style="left:1038.50px;top:51px;font-size:9.6px;line-height:9.6px;letter-spacing:-0.192px;color:#cbcbcd;transform:scaleY(1.03);transform-origin:0 85%;">Google Cal...</span>
<svg style="left:1020.5px;top:48.7px" width="13.300" height="13.300" viewBox="0 0 13.300 13.300"><rect width="13.300" height="13.300" rx="2" fill="#4a86e8"/><rect x="10.300" y="2.500" width="3" height="8" fill="#f6bf26"/><rect x="2.500" y="10.300" width="8" height="3" fill="#34a853"/><path d="M10.300 10.300h3l-3 3z" fill="#e94335"/><rect x="2.600" y="2.600" width="7.800" height="7.800" fill="#fff"/></svg>
<span class="t" style="left:1023.90px;top:53px;font-size:6px;line-height:6px;font-weight:700;letter-spacing:-0.094px;color:#3c78dc;">31</span>
<span class="t" style="left:1138.50px;top:51px;font-size:9.6px;line-height:9.6px;letter-spacing:-0.190px;color:#cbcbcd;transform:scaleY(1.03);transform-origin:0 85%;">Is My Idea...</span>
<svg style="left:1120.5px;top:48.7px" width="13.300" height="13.300" viewBox="0 0 13.300 13.300"><rect width="13.300" height="13.300" rx="2.800" fill="#e6e6e8"/><g class="s" stroke="#2a2a2c" stroke-width=".9"><path d="M3.500 2.800c1-.8 2.200-.6 2.800.2M2.800 4.600c1.400-.9 3.600-.8 4.600.4M3.200 6.200c1.200-.5 2.600-.3 3.400.6M4.200 7.200c.2 1.600 1.400 2.600 2.800 2.400M6.800 6.400c1.600.4 2.800 1.800 2.800 3.400 0 .9-.8 1.500-1.600 1.200"/><circle cx="8.200" cy="8.800" r="1.100"/></g></svg>
</body></html>
